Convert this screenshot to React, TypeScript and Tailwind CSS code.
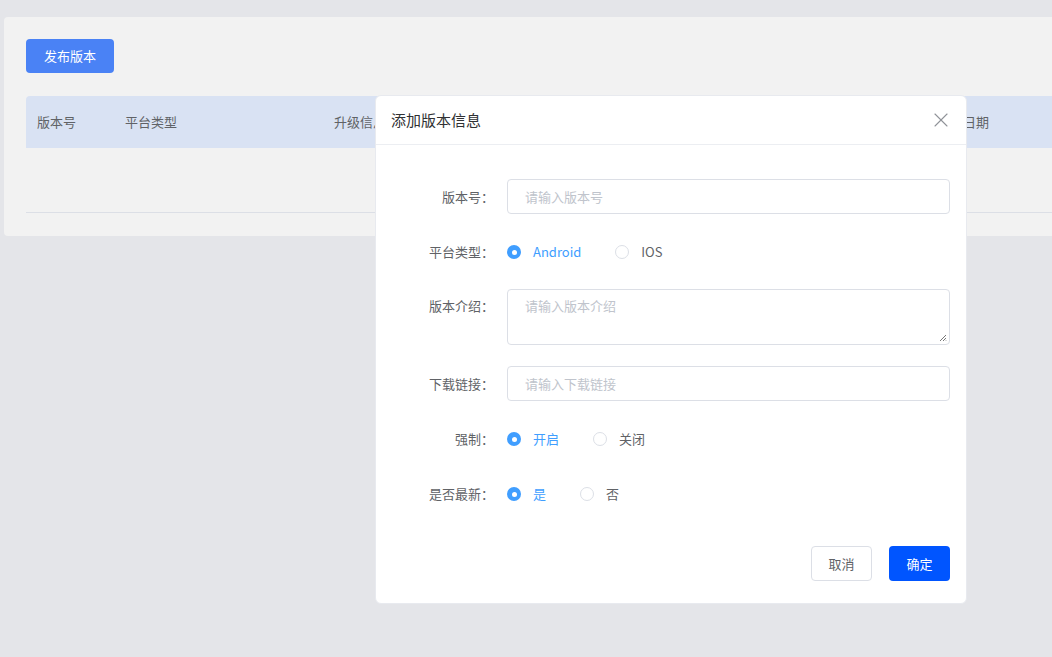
import React from 'react';
import { X } from 'lucide-react';

const font = { fontFamily: '"Noto Sans CJK SC", "Noto Sans", sans-serif' };

const Radio: React.FC<{ checked?: boolean; label: string }> = ({ checked, label }) => (
    <label className="flex items-center gap-[12px] mr-[34px]">
        {checked ? (
            <span className="w-[14px] h-[14px] rounded-full bg-[#409eff] flex items-center justify-center">
                <span className="w-[5px] h-[5px] rounded-full bg-white"></span>
            </span>
        ) : (
            <span className="w-[14px] h-[14px] rounded-full border border-[#dcdfe6] bg-white"></span>
        )}
        <span className={checked ? 'text-[13px] text-[#409eff]' : 'text-[13px] text-[#606266]'}>{label}</span>
    </label>
);

const Row: React.FC<{ label: string; children: React.ReactNode; className?: string; labelClass?: string }> = ({ label, children, className, labelClass }) => (
    <div className={`flex items-center ${className ?? ''}`}>
        <div className={`w-[131px] pr-[13px] text-right text-[13px] text-[#606266] shrink-0 ${labelClass ?? ''}`}>{label}：</div>
        <div className="flex-1 flex items-center">{children}</div>
    </div>
);

export default function App() {
    return (
        <div className="w-[1052px] h-[657px] bg-[#e4e5e9] overflow-hidden relative pt-[17px] pl-[4px]" style={font}>
            <div className="bg-[#f2f2f2] rounded-[4px] h-[219px] w-[1100px] pt-[22px] px-[22px]">
                <button className="h-[34px] w-[88px] rounded-[4px] bg-[#4a82f5] text-white text-[13px]">发布版本</button>
                <div className="mt-[23px] h-[52px] bg-[#d9e2f3] rounded-t-[4px] flex items-center text-[13px] text-[#606266]">
                    <span className="w-[99px] pl-[11px] shrink-0">版本号</span>
                    <span className="w-[209px] shrink-0">平台类型</span>
                    <span className="w-[600px] shrink-0">升级信息</span>
                    <span className="ml-[3px]">发布日期</span>
                </div>
                <div className="h-[65px] border-b border-[#dcdfe6]"></div>
            </div>

            <div className="absolute left-[375px] top-[95px] w-[592px] h-[509px] bg-white rounded-[6px] border border-[#e8eaef] flex flex-col">
                <div className="h-[49px] border-b border-[#eceef2] flex items-center justify-between pl-[15px] pr-[13px]">
                    <span className="text-[15px] text-[#303133]">添加版本信息</span>
                    <X size={24} strokeWidth={1.1} className="text-[#909399]" />
                </div>
                <div className="pt-[34px] pr-[16px]">
                    <Row label="版本号">
                        <div className="h-[35px] w-full rounded-[4px] border border-[#dcdfe6] flex items-center pl-[17px] text-[13px] text-[#c0c4cc]">请输入版本号</div>
                    </Row>
                    <Row label="平台类型" className="mt-[21px] h-[34px]">
                        <Radio checked label="Android" />
                        <Radio label="IOS" />
                    </Row>
                    <Row label="版本介绍" className="mt-[20px] !items-start" labelClass="pt-[7px]">
                        <div className="h-[56px] w-full rounded-[4px] border border-[#dcdfe6] pl-[17px] pt-[6px] text-[13px] text-[#c0c4cc] relative">
                            请输入版本介绍
                            <svg className="absolute right-[2px] bottom-[2px]" width="8" height="8" viewBox="0 0 8 8">
                                <path d="M1 7L7 1M4 7L7 4M6.5 7L7 6.5" stroke="#555" strokeWidth="0.8" />
                            </svg>
                        </div>
                    </Row>
                    <Row label="下载链接" className="mt-[21px]">
                        <div className="h-[35px] w-full rounded-[4px] border border-[#dcdfe6] flex items-center pl-[17px] text-[13px] text-[#c0c4cc]">请输入下载链接</div>
                    </Row>
                    <Row label="强制" className="mt-[21px] h-[34px]">
                        <Radio checked label="开启" />
                        <Radio label="关闭" />
                    </Row>
                    <Row label="是否最新" className="mt-[21px] h-[34px]">
                        <Radio checked label="是" />
                        <Radio label="否" />
                    </Row>
                </div>
                <div className="mt-auto mb-[22px] flex justify-end gap-[17px] pr-[16px]">
                    <button className="h-[35px] w-[61px] rounded-[4px] border border-[#dcdfe6] bg-white text-[13px] text-[#606266]">取消</button>
                    <button className="h-[35px] w-[61px] rounded-[4px] bg-[#0055ff] text-[13px] text-white">确定</button>
                </div>
            </div>
        </div>
    );
}
